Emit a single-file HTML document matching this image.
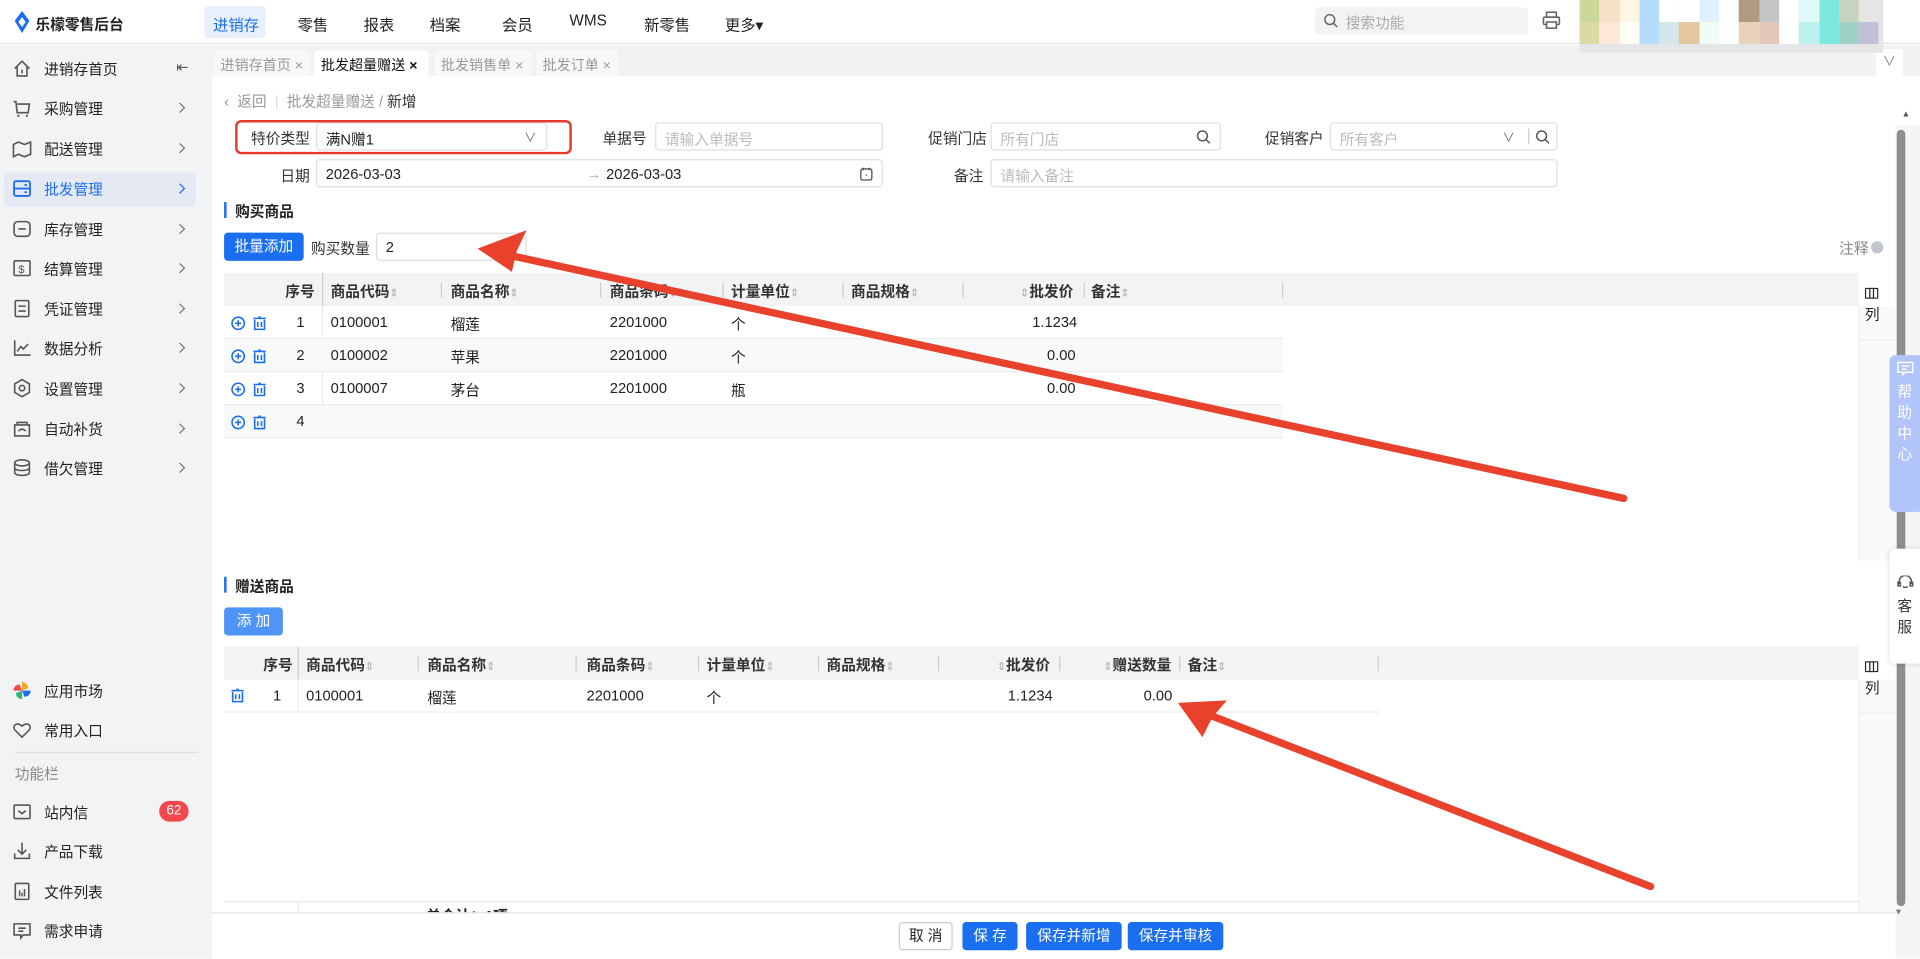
<!DOCTYPE html>
<html><head><meta charset="utf-8">
<style>
*{box-sizing:border-box;margin:0;padding:0}
html,body{width:1920px;height:959px;overflow:hidden;background:#fff}
body{font-family:"Liberation Sans","Noto Sans CJK SC",sans-serif;font-size:12px;color:#222}
#w{position:absolute;left:0;top:0;width:1568px;height:783px;transform:scale(1.22449);transform-origin:0 0;overflow:hidden}
.a{position:absolute;white-space:nowrap}
.nav{position:absolute;top:10px;font-size:12.5px;color:#222}
.side{position:absolute;left:0;top:37px;width:173px;height:746px;background:#f2f3f5}
.si{position:absolute;left:10px;width:150px;height:26px;display:flex;align-items:center;font-size:12px;color:#222}
.si .ar{position:absolute;right:10px;top:10px;width:6px;height:6px;border-right:1.2px solid #777;border-top:1.2px solid #777;transform:rotate(45deg)}
.tab{position:absolute;top:41px;height:21px;background:#f7f8fa;color:#999;font-size:11.5px;padding:4px 5px;border-radius:3px 3px 0 0;white-space:nowrap;overflow:hidden}
.inp{position:absolute;height:23px;border:1px solid #dcdfe6;border-radius:3px;background:#fff;padding:4px 7px;color:#bbb;font-size:12px;white-space:nowrap}
.lbl{position:absolute;font-size:12px;color:#333;white-space:nowrap}
.th{position:absolute;height:27px;background:#f2f3f5;font-weight:bold;font-size:12px;color:#333}
.th span,.tr span{position:absolute;top:6px;white-space:nowrap}
.tr{position:absolute;height:27px;border-bottom:1px solid #ececec;font-size:12px;color:#222}
.dv{position:absolute;top:8px;width:1px;height:12px;background:#ccc}
.srt{color:#aaa;font-weight:normal;font-size:9px;font-style:normal}
.btn{position:absolute;height:23px;border-radius:3px;background:#1a6ef0;color:#fff;font-size:12px;text-align:center;line-height:23px;white-space:nowrap}
</style></head><body><div id="w">

<!-- top bar -->
<div class="a" style="left:0;top:0;width:1568px;height:36px;background:#fff;border-bottom:1px solid #e2e3e5"></div>
<svg class="a" style="left:11px;top:9px" width="14" height="18" viewBox="0 0 14 18"><path d="M7 0 L13 8 L7 18 L1 8Z" fill="#1a6ef0"/><path d="M7 5 L10 9 L7 13 L4 9Z" fill="#fff"/></svg>
<div class="a" style="left:29px;top:11px;font-size:12px;font-weight:bold;color:#222">乐檬零售后台</div>
<div class="a" style="left:167px;top:5px;width:50px;height:26px;background:#e8f0fe;border-radius:3px"></div>
<div class="nav" style="left:174px;color:#1a6ef0">进销存</div>
<div class="nav" style="left:243px">零售</div>
<div class="nav" style="left:297px">报表</div>
<div class="nav" style="left:351px">档案</div>
<div class="nav" style="left:410px">会员</div>
<div class="nav" style="left:465px">WMS</div>
<div class="nav" style="left:526px">新零售</div>
<div class="nav" style="left:592px">更多▾</div>
<div class="a" style="left:1074px;top:6px;width:174px;height:22px;background:#f2f3f5;border-radius:3px"></div>
<svg class="a" style="left:1081px;top:11px" width="12" height="12"><circle cx="5" cy="5" r="4" stroke="#666" stroke-width="1.2" fill="none"/><path d="M8 8 L11 11" stroke="#666" stroke-width="1.2"/></svg>
<div class="a" style="left:1099px;top:10px;color:#aaa">搜索功能</div>
<svg class="a" style="left:1259px;top:9px" width="16" height="16"><rect x="4" y="1" width="8" height="4" fill="none" stroke="#666" stroke-width="1.3"/><rect x="1.5" y="5" width="13" height="6" rx="1" fill="none" stroke="#666" stroke-width="1.3"/><rect x="4" y="9" width="8" height="5" fill="#fff" stroke="#666" stroke-width="1.3"/></svg>

<!-- sidebar -->
<div class="side"></div>
<div class="a" style="left:3px;top:141px;width:157px;height:28px;background:#e4e9f4;border-radius:5px"></div>
<div class="si" style="top:43px"><svg width="16" height="16" style="margin-right:10px"><path d="M2 8 L8 2 L14 8 M4 6 V14 H12 V6 M8 9 V12" fill="none" stroke="#555" stroke-width="1.3"/></svg>进销存首页<span style="position:absolute;right:6px;top:5px;color:#555">⇤</span></div>
<div class="si" style="top:75px"><svg width="16" height="16" style="margin-right:10px"><path d="M1 3 H3 L4 12 H13 L14 5 H4" fill="none" stroke="#555" stroke-width="1.3"/><circle cx="5" cy="14.5" r=".9" fill="#555"/><circle cx="12" cy="14.5" r=".9" fill="#555"/></svg>采购管理<i class="ar"></i></div>
<div class="si" style="top:108px"><svg width="16" height="16" style="margin-right:10px"><path d="M1 5 L5 3 L10 5 L15 3 V13 L10 15 L5 13 L1 15Z" fill="none" stroke="#555" stroke-width="1.3"/></svg>配送管理<i class="ar"></i></div>
<div class="si" style="top:141px;color:#1a6ef0"><svg width="16" height="16" style="margin-right:10px"><rect x="1.5" y="2" width="13" height="12" rx="1.5" fill="none" stroke="#1a6ef0" stroke-width="1.5"/><path d="M1.5 8 H14.5 M10 5 H12 M10 11 H12" stroke="#1a6ef0" stroke-width="1.5"/></svg>批发管理<i class="ar" style="border-color:#1a6ef0"></i></div>
<div class="si" style="top:174px"><svg width="16" height="16" style="margin-right:10px"><rect x="1.5" y="2" width="13" height="12" rx="3" fill="none" stroke="#555" stroke-width="1.3"/><path d="M5 8 H11" stroke="#555" stroke-width="1.3"/></svg>库存管理<i class="ar"></i></div>
<div class="si" style="top:206px"><svg width="16" height="16" style="margin-right:10px"><rect x="1.5" y="2" width="13" height="12" rx="1" fill="none" stroke="#555" stroke-width="1.3"/><text x="5" y="12" font-size="9" fill="#555">$</text></svg>结算管理<i class="ar"></i></div>
<div class="si" style="top:239px"><svg width="16" height="16" style="margin-right:10px"><rect x="2.5" y="1.5" width="11" height="13" rx="1" fill="none" stroke="#555" stroke-width="1.3"/><path d="M5 6 H11 M5 10 H11" stroke="#555" stroke-width="1.3"/></svg>凭证管理<i class="ar"></i></div>
<div class="si" style="top:271px"><svg width="16" height="16" style="margin-right:10px"><path d="M2 2 V14 H15 M4 11 L7 7 L9 9 L13 5" fill="none" stroke="#555" stroke-width="1.3"/></svg>数据分析<i class="ar"></i></div>
<div class="si" style="top:304px"><svg width="16" height="16" style="margin-right:10px"><path d="M8 1 L14 4.5 V11.5 L8 15 L2 11.5 V4.5Z" fill="none" stroke="#555" stroke-width="1.3"/><circle cx="8" cy="8" r="2.2" fill="none" stroke="#555" stroke-width="1.3"/></svg>设置管理<i class="ar"></i></div>
<div class="si" style="top:337px"><svg width="16" height="16" style="margin-right:10px"><path d="M4 5 V3 H12 V5 M2 5 H14 V14 H2Z M5 10 C7 8 9 8 11 10" fill="none" stroke="#555" stroke-width="1.3"/></svg>自动补货<i class="ar"></i></div>
<div class="si" style="top:369px"><svg width="16" height="16" style="margin-right:10px"><ellipse cx="8" cy="4" rx="6" ry="2.5" fill="none" stroke="#555" stroke-width="1.3"/><path d="M2 4 V12 C2 15 14 15 14 12 V4 M2 8 C2 11 14 11 14 8" fill="none" stroke="#555" stroke-width="1.3"/></svg>借欠管理<i class="ar"></i></div>

<div class="si" style="top:551px"><svg width="16" height="16" style="margin-right:10px"><path d="M8 8 L8 1 A5 5 0 0 1 13 6Z" fill="#f5a623"/><path d="M8 8 L15 8 A5 5 0 0 1 10 13Z" fill="#1a6ef0"/><path d="M8 8 L8 15 A5 5 0 0 1 3 10Z" fill="#2eb872"/><path d="M8 8 L1 8 A5 5 0 0 1 6 3Z" fill="#f04b4b"/></svg>应用市场</div>
<div class="si" style="top:583px"><svg width="16" height="16" style="margin-right:10px"><path d="M8 14 L2 8 C0 5 3 1 8 5 C13 1 16 5 14 8Z" fill="none" stroke="#555" stroke-width="1.3"/></svg>常用入口</div>
<div class="a" style="left:12px;top:614px;width:150px;height:1px;background:#ddd"></div>
<div class="a" style="left:12px;top:623px;color:#888">功能栏</div>
<div class="si" style="top:650px"><svg width="16" height="16" style="margin-right:10px"><rect x="1.5" y="2.5" width="13" height="11" rx="1" fill="none" stroke="#555" stroke-width="1.3"/><path d="M5 7 L8 9.5 L11 7" fill="none" stroke="#555" stroke-width="1.3"/></svg>站内信<span style="position:absolute;left:120px;top:4px;width:24px;height:17px;border-radius:9px;background:#f5474e;color:#fff;font-size:11px;text-align:center;line-height:17px">62</span></div>
<div class="si" style="top:682px"><svg width="16" height="16" style="margin-right:10px"><path d="M8 1 V10 M4.5 7 L8 10.5 L11.5 7 M2 10 V14 H14 V10" fill="none" stroke="#555" stroke-width="1.3"/></svg>产品下载</div>
<div class="si" style="top:715px"><svg width="16" height="16" style="margin-right:10px"><rect x="2.5" y="1.5" width="11" height="13" rx="1" fill="none" stroke="#555" stroke-width="1.3"/><path d="M6 7 V12 M8 9 V12 M10 6 V12" stroke="#555" stroke-width="1.2"/></svg>文件列表</div>
<div class="si" style="top:747px"><svg width="16" height="16" style="margin-right:10px"><path d="M1.5 2.5 H14.5 V11.5 H9 L7 14 V11.5 H1.5Z M5 6 H11 M5 8.5 H9" fill="none" stroke="#555" stroke-width="1.3"/></svg>需求申请</div>

<!-- tabs bar -->
<div class="a" style="left:173px;top:37px;width:1395px;height:25px;background:#f1f2f4"></div>
<div class="tab" style="left:175px;width:78px">进销存首页 ×</div>
<div class="tab" style="left:257px;width:93px;background:#fff;color:#111">批发超量赠送 <b>×</b></div>
<div class="tab" style="left:355px;width:79px">批发销售单 ×</div>
<div class="tab" style="left:438px;width:67px">批发订单 ×</div>
<div class="a" style="left:1532px;top:40px;width:22px;height:22px;background:#fff;color:#888;text-align:center;font-size:11px;line-height:22px">∨</div>

<!-- content -->
<div class="a" style="left:183px;top:74px;color:#999">‹&nbsp; 返回 &nbsp;<span style="color:#ddd">|</span>&nbsp; 批发超量赠送 / <span style="color:#333">新增</span></div>

<div class="a" style="left:192px;top:98px;width:275px;height:28px;border:2px solid #e53a2c;border-radius:5px"></div>
<div class="lbl" style="left:205px;top:104px">特价类型</div>
<div class="inp" style="left:258px;top:100px;width:189px;color:#222">满N赠1<span style="position:absolute;right:8px;top:3px;color:#666;font-size:10px">∨</span></div>
<div class="lbl" style="left:492px;top:104px">单据号</div>
<div class="inp" style="left:535px;top:100px;width:186px">请输入单据号</div>
<div class="lbl" style="left:758px;top:104px">促销门店</div>
<div class="inp" style="left:809px;top:100px;width:188px">所有门店<svg style="position:absolute;right:7px;top:5px" width="12" height="12"><circle cx="5" cy="5" r="4" stroke="#555" stroke-width="1.2" fill="none"/><path d="M8 8 L11 11" stroke="#555" stroke-width="1.2"/></svg></div>
<div class="lbl" style="left:1033px;top:104px">促销客户</div>
<div class="inp" style="left:1086px;top:100px;width:186px">所有客户<span style="position:absolute;right:34px;top:3px;color:#666;font-size:10px">∨</span><span style="position:absolute;right:22px;top:4px;width:1px;height:13px;background:#ccc"></span><svg style="position:absolute;right:5px;top:5px" width="12" height="12"><circle cx="5" cy="5" r="4" stroke="#555" stroke-width="1.2" fill="none"/><path d="M8 8 L11 11" stroke="#555" stroke-width="1.2"/></svg></div>

<div class="lbl" style="left:229px;top:135px">日期</div>
<div class="inp" style="left:258px;top:130px;width:463px;color:#222">2026-03-03<span style="position:absolute;left:220px;top:4px;color:#aaa">→</span><span style="position:absolute;left:236px;top:4px">2026-03-03</span><svg style="position:absolute;right:7px;top:5px" width="11" height="12"><rect x="1" y="2" width="9" height="9" rx="1.5" fill="none" stroke="#555" stroke-width="1.1"/><path d="M3 1V3M8 1V3M5 7H6" stroke="#555" stroke-width="1.1"/></svg></div>
<div class="lbl" style="left:779px;top:135px">备注</div>
<div class="inp" style="left:809px;top:130px;width:463px">请输入备注</div>

<div class="a" style="left:183px;top:165px;width:2px;height:13px;background:#1a6ef0"></div>
<div class="a" style="left:192px;top:164px;font-weight:bold;font-size:12px">购买商品</div>
<div class="btn" style="left:183px;top:190px;width:65px">批量添加</div>
<div class="lbl" style="left:254px;top:194px">购买数量</div>
<div class="inp" style="left:307px;top:190px;width:123px;color:#222">2</div>
<div class="a" style="left:1502px;top:194px;color:#888">注释<span style="display:inline-block;width:10px;height:10px;border-radius:5px;background:#c0c4cc;margin-left:2px"></span></div>

<!-- table 1 -->
<div class="th" style="left:183px;top:223px;width:1335px">
<span style="left:50px">序号</span><div class="dv" style="left:80px;top:0;height:27px"></div>
<span style="left:87px">商品代码<i class="srt">⇕</i></span><div class="dv" style="left:177px"></div>
<span style="left:185px">商品名称<i class="srt">⇕</i></span><div class="dv" style="left:307px"></div>
<span style="left:315px">商品条码<i class="srt">⇕</i></span><div class="dv" style="left:407px"></div>
<span style="left:414px">计量单位<i class="srt">⇕</i></span><div class="dv" style="left:505px"></div>
<span style="left:512px">商品规格<i class="srt">⇕</i></span><div class="dv" style="left:603px"></div>
<span style="left:650px"><i class="srt">⇕</i>批发价</span><div class="dv" style="left:702px"></div>
<span style="left:708px">备注<i class="srt">⇕</i></span><div class="dv" style="left:864px"></div>
</div>
<div class="a" style="left:263px;top:250px;width:1px;height:108px;background:#ececec"></div>
<div class="tr" style="left:183px;top:250px;width:865px"><span style="left:59px">1</span><span style="left:87px">0100001</span><span style="left:185px">榴莲</span><span style="left:315px">2201000</span><span style="left:414px">个</span><span style="left:660px">1.1234</span></div>
<div class="tr" style="left:183px;top:277px;width:865px;background:#f8faf9"><span style="left:59px">2</span><span style="left:87px">0100002</span><span style="left:185px">苹果</span><span style="left:315px">2201000</span><span style="left:414px">个</span><span style="left:672px">0.00</span></div>
<div class="tr" style="left:183px;top:304px;width:865px"><span style="left:59px">3</span><span style="left:87px">0100007</span><span style="left:185px">茅台</span><span style="left:315px">2201000</span><span style="left:414px">瓶</span><span style="left:672px">0.00</span></div>
<div class="tr" style="left:183px;top:331px;width:865px;background:#f8faf9"><span style="left:59px">4</span></div>
<svg class="a" style="left:188px;top:257px" width="34" height="100">
<g id="r"><circle cx="6.5" cy="7" r="5" fill="#fff" stroke="#1a6ef0" stroke-width="1.3"/><path d="M6.5 4.5V9.5M4 7H9" stroke="#1a6ef0" stroke-width="1.3"/><path d="M19 3H29M23 2H25M20 4V12H28V4M22.5 6V10M25.5 6V10" fill="none" stroke="#1a6ef0" stroke-width="1.3"/></g>
<use href="#r" y="27"/><use href="#r" y="54"/><use href="#r" y="81"/>
</svg>

<div class="a" style="left:1518px;top:223px;width:30px;height:235px;background:#f9fafb;border-left:1px solid #eee"></div>
<div class="a" style="left:1518px;top:223px;width:30px;height:27px;background:#fff"></div>
<svg class="a" style="left:1523px;top:235px" width="11" height="9"><rect x=".5" y=".5" width="10" height="8" fill="none" stroke="#222"/><path d="M4 0V9M7 0V9" stroke="#222"/></svg>
<div class="a" style="left:1523px;top:248px;font-size:12px">列</div>
<div class="a" style="left:1518px;top:277px;width:30px;height:1px;background:#eee"></div>

<!-- section 2 -->
<div class="a" style="left:183px;top:471px;width:2px;height:13px;background:#1a6ef0"></div>
<div class="a" style="left:192px;top:470px;font-weight:bold;font-size:12px">赠送商品</div>
<div class="btn" style="left:183px;top:496px;width:48px;background:#4e95f7">添 加</div>

<div class="th" style="left:183px;top:528px;width:1335px">
<span style="left:32px">序号</span><div class="dv" style="left:60px;top:0;height:27px"></div>
<span style="left:67px">商品代码<i class="srt">⇕</i></span><div class="dv" style="left:158px"></div>
<span style="left:166px">商品名称<i class="srt">⇕</i></span><div class="dv" style="left:287px"></div>
<span style="left:296px">商品条码<i class="srt">⇕</i></span><div class="dv" style="left:387px"></div>
<span style="left:394px">计量单位<i class="srt">⇕</i></span><div class="dv" style="left:485px"></div>
<span style="left:492px">商品规格<i class="srt">⇕</i></span><div class="dv" style="left:583px"></div>
<span style="left:631px"><i class="srt">⇕</i>批发价</span><div class="dv" style="left:682px"></div>
<span style="left:718px"><i class="srt">⇕</i>赠送数量</span><div class="dv" style="left:780px"></div>
<span style="left:787px">备注<i class="srt">⇕</i></span><div class="dv" style="left:942px"></div>
</div>
<div class="a" style="left:243px;top:555px;width:1px;height:27px;background:#ececec"></div>
<div class="tr" style="left:183px;top:555px;width:944px"><span style="left:40px">1</span><span style="left:67px">0100001</span><span style="left:166px">榴莲</span><span style="left:296px">2201000</span><span style="left:394px">个</span><span style="left:640px">1.1234</span><span style="left:751px">0.00</span></div>
<svg class="a" style="left:188px;top:562px" width="14" height="14"><path d="M1 2H11M5 1H7M2 3V11H10V3M4.5 5V9M7.5 5V9" fill="none" stroke="#1a6ef0" stroke-width="1.3"/></svg>
<div class="a" style="left:1518px;top:528px;width:30px;height:217px;background:#f9fafb;border-left:1px solid #eee"></div>
<div class="a" style="left:1518px;top:528px;width:30px;height:27px;background:#fff"></div>
<svg class="a" style="left:1523px;top:540px" width="11" height="9"><rect x=".5" y=".5" width="10" height="8" fill="none" stroke="#222"/><path d="M4 0V9M7 0V9" stroke="#222"/></svg>
<div class="a" style="left:1523px;top:553px;font-size:12px">列</div>
<div class="a" style="left:1518px;top:582px;width:30px;height:1px;background:#eee"></div>

<div class="a" style="left:183px;top:736px;width:1335px;height:1px;background:#e6e6e6"></div>
<div class="a" style="left:243px;top:736px;width:1px;height:10px;background:#e6e6e6"></div>
<div class="a" style="left:348px;top:741px;font-weight:bold;height:5px;overflow:hidden;line-height:14px">单合计：1项</div>

<!-- footer -->
<div class="a" style="left:173px;top:745px;width:1375px;height:38px;background:#fff;border-top:1px solid #e3e3e3"></div>
<div class="btn" style="left:734px;top:753px;width:44px;background:#fff;color:#222;border:1px solid #ccc;line-height:21px">取 消</div>
<div class="btn" style="left:786px;top:753px;width:45px">保 存</div>
<div class="btn" style="left:838px;top:753px;width:78px">保存并新增</div>
<div class="btn" style="left:921px;top:753px;width:78px">保存并审核</div>

<!-- scrollbar -->
<div class="a" style="left:1548px;top:62px;width:20px;height:721px;background:#f5f5f5"></div>
<div class="a" style="left:1548px;top:62px;width:20px;height:40px;background:#fff"></div>
<div class="a" style="left:1553px;top:90px;font-size:7px;color:#555">▲</div>
<div class="a" style="left:1549px;top:106px;width:7px;height:634px;background:#8e8e8e;border-radius:4px"></div>
<div class="a" style="left:1547px;top:742px;font-size:7px;color:#777">▼</div>

<!-- help floats -->
<div class="a" style="left:1543px;top:290px;width:25px;height:128px;background:#b2c5fb;border-radius:5px 0 0 5px;color:#fff;font-size:12px;text-align:center;line-height:17px;padding-top:5px;white-space:normal">
<svg width="14" height="12"><path d="M1 1H13V9H7L5 11V9H1Z M4 4H10M4 6.5H8" fill="none" stroke="#fff" stroke-width="1.2"/></svg><br>帮<br>助<br>中<br>心</div>
<div class="a" style="left:1543px;top:448px;width:25px;height:94px;background:#fff;border-radius:5px 0 0 5px;box-shadow:0 0 4px rgba(0,0,0,.15);font-size:12px;text-align:center;line-height:17px;padding-top:22px;color:#333;white-space:normal">
<svg width="14" height="12"><path d="M2 7V5A5 5 0 0 1 12 5V7M1 5.5H3V8.5H1ZM11 5.5H13V8.5H11Z M5 9C6 10 8 10 9 9" fill="none" stroke="#555" stroke-width="1.2"/></svg><br>客<br>服</div>

<!-- avatar pixel grid -->
<div class="a" style="left:1290px;top:0;width:248px;height:43px;background:#e4e5e7"></div>
<div class="a" style="left:1290px;top:0;display:grid;grid-template-columns:repeat(15,16.3px);grid-template-rows:18px 18px">
<i style="background:#cbd89a"></i><i style="background:#f6e0c6"></i><i style="background:#fef6e1"></i><i style="background:#b5dcfb"></i><i style="background:#fff"></i><i style="background:#fff"></i><i style="background:#dff0ff"></i><i style="background:#fff"></i><i style="background:#b09a80"></i><i style="background:#c5c5c5"></i><i style="background:#fff"></i><i style="background:#e0f8f6"></i><i style="background:#7ce9df"></i><i style="background:#c8d4c0"></i><i style="background:#e6e6e6"></i>
<i style="background:#dcd9a4"></i><i style="background:#fde9d5"></i><i style="background:#fffef4"></i><i style="background:#b5dcfb"></i><i style="background:#d4e8ec"></i><i style="background:#e3c8a0"></i><i style="background:#eefcf3"></i><i style="background:#fff"></i><i style="background:#e8d2bb"></i><i style="background:#e3c8ba"></i><i style="background:#fff"></i><i style="background:#bdf1ed"></i><i style="background:#7ce9df"></i><i style="background:#9ed0c6"></i><i style="background:#c0c0d8"></i>
</div>

<!-- red arrows -->
<svg class="a" style="left:0;top:0" width="1568" height="783">
<g stroke="#e8412c" stroke-width="6" stroke-linecap="round" fill="none">
<path d="M1326 407 L400 205"/>
<path d="M1348 724 L970 577"/>
</g>
<path d="M390 203 L430 188 L422 205 L418 222Z" fill="#e8412c"/>
<path d="M962 574 L1002 572 L990 586 L982 602Z" fill="#e8412c"/>
</svg>

</div></body></html>
